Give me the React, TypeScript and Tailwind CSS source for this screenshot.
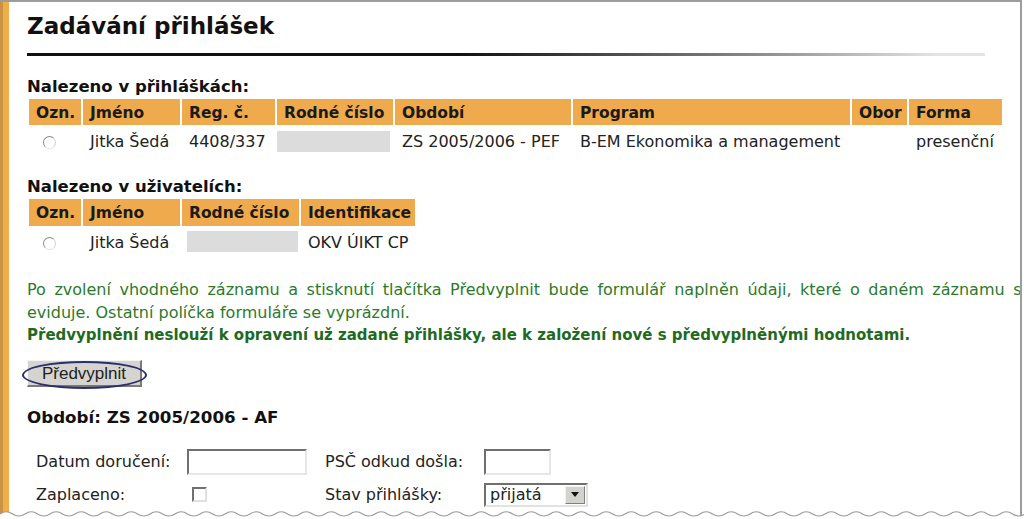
import React from "react"

const wavePath = (() => {
  let d = "M0,514"
  for (let x = 0; x < 1040; x += 25) {
    d += ` q6.25,-4.5 12.5,0 q6.25,4 12.5,0`
  }
  return d
})()

function Radio() {
  return (
    <span className="inline-block h-[13px] w-[13px] rounded-full border border-[#8c8c8c] border-b-[#e2e2e2] border-r-[#d0d0d0] bg-white align-middle" />
  )
}

export default function App() {
  const th = "h-[26px] bg-[#eeaa4c] pl-[7px] pt-[3px] text-left text-[15.5px] font-bold text-[#1a1a1a] whitespace-nowrap"
  const td = "h-[28px] pl-[7px] pt-[2px] text-[#222] whitespace-nowrap"

  return (
    <div className="relative h-[519px] w-[1024px] overflow-hidden bg-white font-['DejaVu_Sans',Verdana,sans-serif] text-[16px]">
      <div className="mr-[2px] flex h-full border-r-2 border-t-2 border-[#9c9c9c]">
        <div className="w-[3px] shrink-0 bg-[#c99346]" />
        <div className="w-[6px] shrink-0 bg-[#efae47]" />
        <div className="min-w-0 flex-1 overflow-hidden pl-[18px]">
          <h1 className="mt-[10px] text-[23px] font-bold leading-[28px] text-[#111]">Zadávání přihlášek</h1>
          <div className="mt-[13px] h-[3px] w-[958px] bg-gradient-to-r from-[#111] from-45% to-[#e4e4e4] to-95%" />

          <h2 className="mt-[21px] text-[16.5px] font-bold leading-[20px] text-[#111]">Nalezeno v přihláškách:</h2>
          <table className="table-fixed border-separate border-spacing-[2px]">
            <thead>
              <tr>
                <th className={`${th} w-[52px]`}>Ozn.</th>
                <th className={`${th} w-[97px]`}>Jméno</th>
                <th className={`${th} w-[93px]`}>Reg. č.</th>
                <th className={`${th} w-[116px]`}>Rodné číslo</th>
                <th className={`${th} w-[176px]`}>Období</th>
                <th className={`${th} w-[277px]`}>Program</th>
                <th className={`${th} w-[55px]`}>Obor</th>
                <th className={`${th} w-[93px]`}>Forma</th>
              </tr>
            </thead>
            <tbody>
              <tr>
                <td className={`${td} pl-[14px]`}><Radio /></td>
                <td className={td}>Jitka Šedá</td>
                <td className={td}>4408/337</td>
                <td className="h-[28px] p-0"><div className="h-[21px] w-[113px] bg-[#dcdcdc]" /></td>
                <td className={td}>ZS 2005/2006 - PEF</td>
                <td className={td}>B-EM Ekonomika a management</td>
                <td className={td}></td>
                <td className={td}>presenční</td>
              </tr>
            </tbody>
          </table>

          <h2 className="mt-[20px] text-[16.5px] font-bold leading-[20px] text-[#111]">Nalezeno v uživatelích:</h2>
          <table className="table-fixed border-separate border-spacing-[2px]">
            <thead>
              <tr>
                <th className={`${th} w-[52px]`}>Ozn.</th>
                <th className={`${th} w-[97px]`}>Jméno</th>
                <th className={`${th} w-[117px]`}>Rodné číslo</th>
                <th className={`${th} w-[114px]`}>Identifikace</th>
              </tr>
            </thead>
            <tbody>
              <tr>
                <td className={`${td} pl-[14px]`}><Radio /></td>
                <td className={td}>Jitka Šedá</td>
                <td className="h-[28px] p-0 pl-[5px]"><div className="h-[21px] w-[111px] bg-[#dcdcdc]" /></td>
                <td className={td}>OKV ÚIKT CP</td>
              </tr>
            </tbody>
          </table>

          <div className="mt-[20px] leading-[23px] text-[#2b7a2b]">
            <p className="w-[1044px] text-justify [text-align-last:justify] whitespace-nowrap">
              Po zvolení vhodného záznamu a stisknutí tlačítka Předvyplnit bude formulář naplněn údaji, které o daném záznamu systém
            </p>
            <p>eviduje. Ostatní políčka formuláře se vyprázdní.</p>
            <p className="text-[15px] font-bold text-[#1f6a1f]">
              Předvyplnění neslouží k opravení už zadané přihlášky, ale k založení nové s předvyplněnými hodnotami.
            </p>
          </div>

          <div className="relative mt-[13px] w-[115px]">
            <button className="h-[27px] w-[115px] border border-b-2 border-r-2 border-[#f4f4f4] border-b-[#7a7a7a] border-r-[#7a7a7a] bg-[#d6d4d0] font-['Liberation_Sans',Arial,sans-serif] text-[17px] text-[#222]">
              Předvyplnit
            </button>
            <span className="pointer-events-none absolute -bottom-[2px] -left-[5px] -right-[5px] top-[1px] rounded-[50%] border-2 border-[#2c2f6b]" />
          </div>

          <h2 className="mt-[20px] text-[16.7px] font-bold leading-[20px] text-[#111]">Období: ZS 2005/2006 - AF</h2>

          <div className="mt-[22px] grid grid-cols-[151px_120px_18px_159px_auto] items-center gap-y-[8px] pl-[9px] text-[#222]">
            <span>Datum doručení:</span>
            <input className="h-[26px] w-[120px] border-2 border-[#6f6f6f] border-b-[#e6e6e6] border-r-[#e6e6e6] bg-white" />
            <span />
            <span>PSČ odkud došla:</span>
            <input className="h-[26px] w-[67px] border-2 border-[#6f6f6f] border-b-[#e6e6e6] border-r-[#e6e6e6] bg-white" />

            <span>Zaplaceno:</span>
            <span className="pl-[5px]">
              <span className="block h-[15px] w-[15px] border-2 border-[#707070] border-b-[#e0e0e0] border-r-[#e0e0e0] bg-white" />
            </span>
            <span />
            <span>Stav přihlášky:</span>
            <div className="flex h-[24px] w-[104px] items-center border-2 border-[#6f6f6f] border-b-[#e2e2e2] border-r-[#e2e2e2] bg-white">
              <span className="flex-1 pl-[4px] leading-[20px]">přijatá</span>
              <span className="mr-[1px] flex h-[18px] w-[20px] items-center justify-center border border-[#f2f2f2] border-b-[#808080] border-r-[#808080] bg-[#d4d2ce]">
                <svg width="8" height="5" viewBox="0 0 8 5"><path d="M0 0h8L4 5z" fill="#111" /></svg>
              </span>
            </div>
          </div>
        </div>
      </div>

      <svg className="absolute bottom-0 left-0" width="1024" height="14" viewBox="0 505 1024 14">
        <path d={`${wavePath} L1040,519 L0,519 Z`} fill="#fff" />
        <path d={wavePath} fill="none" stroke="#9a9a9a" strokeWidth="1.2" />
      </svg>
    </div>
  )
}
